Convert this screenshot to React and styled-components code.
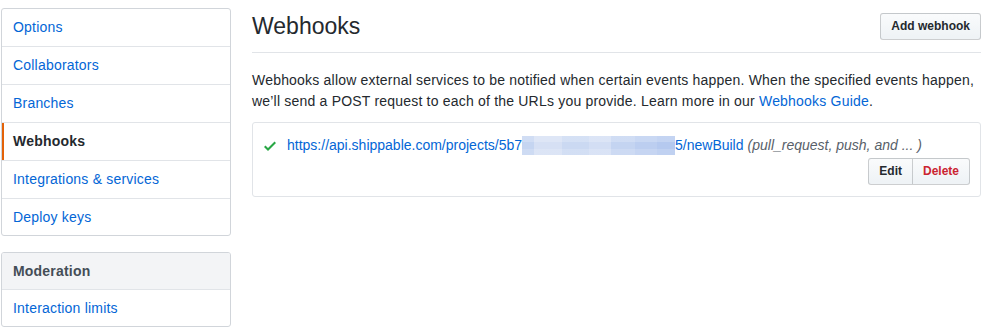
import React from "react";
import styled, { createGlobalStyle } from "styled-components";

const Global = createGlobalStyle`
  html, body { margin: 0; padding: 0; background: #fff; }
  body {
    font-family: "Liberation Sans", Helvetica, Arial, sans-serif;
    font-size: 14px;
    line-height: 1.5;
    letter-spacing: 0.2px;
    color: #24292e;
  }
  * { box-sizing: border-box; }
`;

const Page = styled.div`
  display: flex;
  align-items: flex-start;
  gap: 21px;
  padding: 8px 12px 0 1px;
  width: 993px;
`;

const Sidebar = styled.nav`
  width: 230px;
  flex: none;
  display: flex;
  flex-direction: column;
  gap: 16px;
`;

const Menu = styled.div`
  border: 1px solid #d1d5da;
  border-radius: 3px;
  background: #fff;
  overflow: hidden;
`;

const MenuHeading = styled.div`
  padding: 8px 11px 7px;
  font-weight: 700;
  color: #444d56;
  background: #f3f4f6;
  border-bottom: 1px solid #e1e4e8;
`;

const MenuItem = styled.a`
  position: relative;
  display: block;
  padding: 8px 11px;
  color: ${(p) => (p.$selected ? "#24292e" : "#0366d6")};
  font-weight: ${(p) => (p.$selected ? 700 : 400)};
  text-decoration: none;
  border-bottom: 1px solid #e1e4e8;
  &:last-child { border-bottom: 0; padding-bottom: 7px; }
  ${(p) =>
    p.$selected &&
    `&::before {
      content: "";
      position: absolute;
      left: 0; top: 0; bottom: 0;
      width: 2px;
      background: #e36209;
    }`}
`;

const Main = styled.main`
  flex: 1;
  min-width: 0;
`;

const Subhead = styled.div`
  display: flex;
  align-items: center;
  justify-content: space-between;
  padding-bottom: 8px;
  border-bottom: 1px solid #e1e4e8;
  margin-bottom: 17px;
`;

const Title = styled.h2`
  margin: 0;
  font-size: 23px;
  font-weight: 400;
  line-height: 36px;
  letter-spacing: 0;
  color: #24292e;
`;

const Button = styled.button`
  font-family: inherit;
  font-size: 12px;
  font-weight: 700;
  line-height: 19px;
  letter-spacing: 0;
  padding: 3px 10px;
  color: ${(p) => (p.$danger ? "#cb2431" : "#24292e")};
  background-color: #eff3f6;
  background-image: linear-gradient(-180deg, #fafbfc 0%, #eff3f6 90%);
  border: 1px solid rgba(27, 31, 35, 0.2);
  border-radius: 3px;
  cursor: pointer;
  white-space: nowrap;
`;

const ButtonGroup = styled.div`
  display: flex;
  justify-content: flex-end;
  margin-top: 2px;
  ${Button} {
    border-radius: 0;
  }
  ${Button}:first-child {
    border-radius: 3px 0 0 3px;
  }
  ${Button}:last-child {
    border-radius: 0 3px 3px 0;
    border-left: 0;
  }
`;

const Intro = styled.p`
  margin: 0 0 10px;
`;

const Link = styled.a`
  color: #0366d6;
  text-decoration: none;
`;

const HookBox = styled.div`
  border: 1px solid #e1e4e8;
  border-radius: 3px;
  padding: 12px 10px 11px 10px;
`;

const HookLine = styled.div`
  display: flex;
  align-items: center;
  white-space: nowrap;
  letter-spacing: 0;
`;

const Check = styled.svg`
  width: 12px;
  height: 16px;
  fill: #28a745;
  margin: 0 11px 0 1px;
  flex: none;
`;

const Redacted = styled.span`
  display: inline-block;
  width: 153px;
  height: 19px;
  vertical-align: -5px;
  background:
    linear-gradient(180deg, rgba(255,255,255,0.2) 0 30%, rgba(255,255,255,0) 30% 70%, rgba(255,255,255,0.15) 70% 100%),
    linear-gradient(90deg,
      #c5d5f1 0 8%, #d6e0f4 8% 26%, #cbd9f2 26% 44%,
      #d3def4 44% 58%, #c4d4f1 58% 74%, #bccef0 74% 88%, #b5c9ef 88% 100%);
`;

const Events = styled.em`
  color: #586069;
  margin-left: 4px;
`;

const sideItems = [
  "Options",
  "Collaborators",
  "Branches",
  "Webhooks",
  "Integrations & services",
  "Deploy keys",
];

export default function App() {
  return (
    <>
      <Global />
      <Page>
        <Sidebar>
          <Menu>
            {sideItems.map((t) => (
              <MenuItem key={t} href="#" $selected={t === "Webhooks"}>
                {t}
              </MenuItem>
            ))}
          </Menu>
          <Menu>
            <MenuHeading>Moderation</MenuHeading>
            <MenuItem href="#">Interaction limits</MenuItem>
          </Menu>
        </Sidebar>
        <Main>
          <Subhead>
            <Title>Webhooks</Title>
            <Button>Add webhook</Button>
          </Subhead>
          <Intro>
            Webhooks allow external services to be notified when certain events happen. When the
            specified events happen, we’ll send a POST request to each of the URLs you provide.
            Learn more in our <Link href="#">Webhooks Guide</Link>.
          </Intro>
          <HookBox>
            <HookLine>
              <Check viewBox="0 0 12 16" aria-hidden="true">
                <path d="M12 5l-8 8-4-4 1.5-1.5L4 10l6.5-6.5L12 5z" />
              </Check>
              <Link href="#">
                https://api.shippable.com/projects/5b7<Redacted />5/newBuild
              </Link>
              <Events>(pull_request, push, and ... )</Events>
            </HookLine>
            <ButtonGroup>
              <Button>Edit</Button>
              <Button $danger>Delete</Button>
            </ButtonGroup>
          </HookBox>
        </Main>
      </Page>
    </>
  );
}
